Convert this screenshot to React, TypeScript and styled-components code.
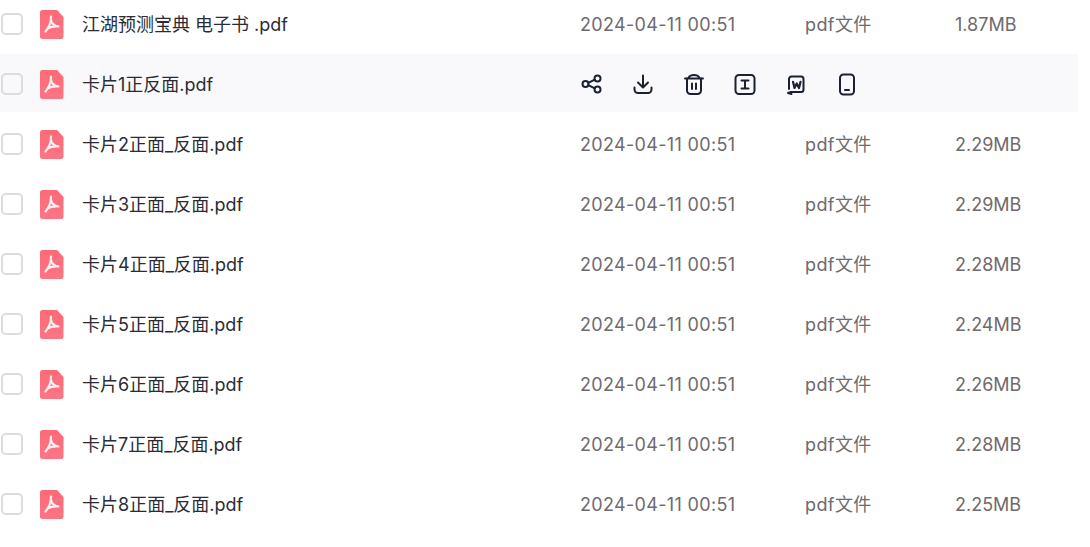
import styled, { createGlobalStyle } from 'styled-components'

interface FileItem {
  name: string
  date: string
  size: string
  hovered?: boolean
}

const files: FileItem[] = [
  { name: '江湖预测宝典 电子书 .pdf', date: '2024-04-11 00:51', size: '1.87MB' },
  { name: '卡片1正反面.pdf', date: '2024-04-11 00:51', size: '2.29MB', hovered: true },
  { name: '卡片2正面_反面.pdf', date: '2024-04-11 00:51', size: '2.29MB' },
  { name: '卡片3正面_反面.pdf', date: '2024-04-11 00:51', size: '2.29MB' },
  { name: '卡片4正面_反面.pdf', date: '2024-04-11 00:51', size: '2.28MB' },
  { name: '卡片5正面_反面.pdf', date: '2024-04-11 00:51', size: '2.24MB' },
  { name: '卡片6正面_反面.pdf', date: '2024-04-11 00:51', size: '2.26MB' },
  { name: '卡片7正面_反面.pdf', date: '2024-04-11 00:51', size: '2.28MB' },
  { name: '卡片8正面_反面.pdf', date: '2024-04-11 00:51', size: '2.25MB' }
]

const GlobalStyle = createGlobalStyle`
  html, body {
    margin: 0;
    height: 100%;
    overflow: hidden;
    background: #fff;
    font-family: Inter, "Noto Sans CJK SC", sans-serif;
  }
`

const List = styled.div`
  display: flex;
  flex-direction: column;
  gap: 2px;
  width: 1078px;
  margin-top: -6px;
`

const Row = styled.div<{ $hovered?: boolean }>`
  display: grid;
  grid-template-columns: 39px 42px 498px 225px 150px 1fr;
  align-items: center;
  box-sizing: border-box;
  height: 58px;
  padding: 2px 0 0 1px;
  background: ${({ $hovered }) => ($hovered ? '#f9f9fc' : 'transparent')};
`

const Checkbox = styled.span`
  display: block;
  width: 18px;
  height: 18px;
  border: 2px solid #dcdcde;
  border-radius: 5px;
`

const Name = styled.span`
  font-size: 18px;
  line-height: 26px;
  margin-top: 2px;
  color: #2b2c33;
  white-space: nowrap;
`

const Meta = styled.span`
  font-size: 18px;
  line-height: 26px;
  margin-top: 2px;
  color: #6f6a6c;
  white-space: nowrap;
`

const DateLabel = styled(Meta)`
  letter-spacing: 0.33px;
`

const TypeLabel = styled(Meta)`
  letter-spacing: 0.4px;
`

const Actions = styled.div`
  display: flex;
  gap: 27px;
  grid-column: 4 / 7;
`

const ActionIcon = styled.svg`
  display: block;
  width: 24px;
  height: 24px;
  fill: none;
  stroke: #1b2130;
  stroke-width: 2;
  stroke-linecap: round;
  stroke-linejoin: round;
`

function PdfIcon() {
  return (
    <svg width="24" height="29" viewBox="0 0 24 29" style={{ display: 'block' }}>
      <defs>
        <linearGradient id="pdfFill" x1="0" y1="0" x2="0" y2="1">
          <stop offset="0" stopColor="#fe6a76" />
          <stop offset="1" stopColor="#fc7585" />
        </linearGradient>
      </defs>
      <path
        d="M2.500 0H17L23.500 7V26.500A2.500 2.500 0 0 1 21 29H2.500A2.500 2.500 0 0 1 0 26.500V2.500A2.500 2.500 0 0 1 2.500 0Z"
        fill="url(#pdfFill)"
      />
      <path
        d="M11 6.500C11 11.500 9.500 17 5.500 21.500M11 10C11.500 13 14 16 18.500 16.500M7.500 18.500C10.500 16.800 14.500 16.200 18.500 16.500"
        fill="none"
        stroke="#ffeef0"
        strokeWidth="2.200"
        strokeLinecap="round"
      />
    </svg>
  )
}

function ShareIcon() {
  return (
    <ActionIcon viewBox="0 0 24 24">
      <circle cx="5.500" cy="12" r="3" />
      <circle cx="17.500" cy="6.500" r="3" />
      <circle cx="17.500" cy="17.500" r="3" />
      <path d="M8.300 10.800L14.800 7.700M8.300 13.200L14.800 16.300" />
    </ActionIcon>
  )
}

function DownloadIcon() {
  return (
    <ActionIcon viewBox="0 0 24 24">
      <path d="M12 3.500V15M7 10.500L12 15.500L17 10.500" />
      <path d="M3.500 15.500V17.500A3.500 3.500 0 0 0 7 21H17A3.500 3.500 0 0 0 20.500 17.500V15.500" />
    </ActionIcon>
  )
}

function TrashIcon() {
  return (
    <ActionIcon viewBox="0 0 24 24">
      <path d="M3 6.500H21M6.500 6C7.500 3.500 9.500 3 12 3S16.500 3.500 17.500 6" />
      <path d="M5 6.500V18.500A3.500 3.500 0 0 0 8.500 22H15.500A3.500 3.500 0 0 0 19 18.500V6.500" />
      <path d="M10 11.500V17M14 11.500V17" />
    </ActionIcon>
  )
}

function TextIcon() {
  return (
    <ActionIcon viewBox="0 0 24 24">
      <rect x="2.500" y="3" width="19" height="19" rx="3.500" />
      <path d="M8.500 8.500H15.500M8.500 16.500H15.500M12 8.500V16.500" />
    </ActionIcon>
  )
}

function WordIcon() {
  return (
    <ActionIcon viewBox="0 0 24 24">
      <path d="M5 17V7A2.500 2.500 0 0 1 7.500 4.500H17A2.500 2.500 0 0 1 19.500 7V17.500A2.500 2.500 0 0 1 17 20H7" />
      <path d="M7.500 22L4 21L7 20" />
      <path d="M9 9.800L10.500 16L12.700 11.500L15 16L16.500 9.800" strokeWidth="2.200" />
    </ActionIcon>
  )
}

function PhoneIcon() {
  return (
    <ActionIcon viewBox="0 0 24 24">
      <rect x="5" y="2.500" width="14" height="20" rx="3.500" />
      <path d="M10 18H14" />
    </ActionIcon>
  )
}

export default function App() {
  return (
    <>
      <GlobalStyle />
      <List>
        {files.map((file) => (
          <Row key={file.name} $hovered={file.hovered}>
            <Checkbox />
            <PdfIcon />
            <Name>{file.name}</Name>
            {file.hovered ? (
              <Actions>
                <ShareIcon />
                <DownloadIcon />
                <TrashIcon />
                <TextIcon />
                <WordIcon />
                <PhoneIcon />
              </Actions>
            ) : (
              <>
                <DateLabel>{file.date}</DateLabel>
                <TypeLabel>pdf文件</TypeLabel>
                <Meta>{file.size}</Meta>
              </>
            )}
          </Row>
        ))}
      </List>
    </>
  )
}
